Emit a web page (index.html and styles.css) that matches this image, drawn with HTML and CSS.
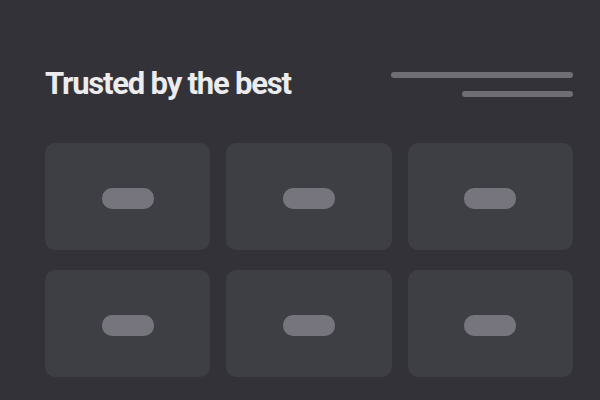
FILE: index.html
```html
<!DOCTYPE html>
<html>
<head>
<meta charset="utf-8">
<link rel="stylesheet" href="styles.css">
</head>
<body>
<section class="logos">
  <header class="head">
    <h2 class="title">Trusted by the best</h2>
    <div class="lines">
      <span class="line line-long"></span>
      <span class="line line-short"></span>
    </div>
  </header>
  <div class="grid">
    <div class="card"><span class="pill"></span></div>
    <div class="card"><span class="pill"></span></div>
    <div class="card"><span class="pill"></span></div>
    <div class="card"><span class="pill"></span></div>
    <div class="card"><span class="pill"></span></div>
    <div class="card"><span class="pill"></span></div>
  </div>
</section>
</body>
</html>
```
FILE: styles.css
```css
html, body {
  margin: 0;
  padding: 0;
  background: #333238;
  width: 600px;
  height: 400px;
  overflow: hidden;
}
.logos {
  padding: 66px 27px 0 45px;
  font-family: Roboto, "Liberation Sans", sans-serif;
}
.head {
  display: flex;
  justify-content: space-between;
  align-items: flex-start;
  height: 77px;
}
.title {
  margin: 0;
  font-size: 31px;
  font-weight: 700;
  color: #ececee;
  letter-spacing: -1.2px;
  line-height: 36px;
}
.lines {
  display: flex;
  flex-direction: column;
  align-items: flex-end;
  gap: 13px;
  padding-top: 6px;
}
.line {
  display: block;
  height: 6px;
  border-radius: 3px;
  background: #6f6e75;
}
.line-long { width: 182px; }
.line-short { width: 111px; }
.grid {
  display: grid;
  grid-template-columns: repeat(3, 1fr);
  column-gap: 16px;
  row-gap: 20px;
}
.card {
  height: 107px;
  box-sizing: border-box;
  padding-top: 3px;
  border-radius: 10px;
  background: #3e3f44;
  display: flex;
  align-items: center;
  justify-content: center;
}
.pill {
  display: block;
  width: 52px;
  height: 21px;
  border-radius: 10px;
  background: #76757d;
}
```
